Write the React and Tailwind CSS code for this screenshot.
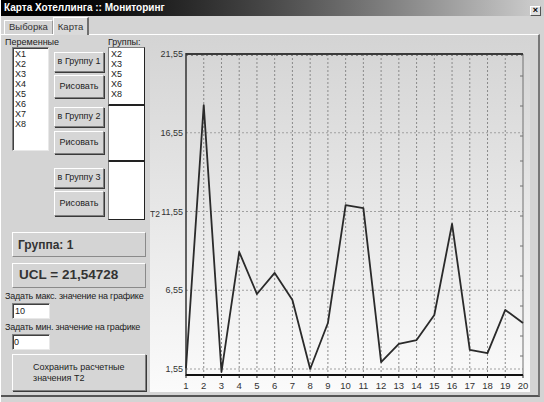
import React from "react";

const font = { fontFamily: '"Liberation Sans", Arial, sans-serif' };

const values = [
  1.6, 18.31, 1.36, 8.98, 6.31, 7.65, 5.93, 1.55, 4.47, 11.96, 11.77, 1.99,
  3.14, 3.39, 4.98, 10.76, 2.76, 2.56, 5.3, 4.47,
];

// chart svg is placed at page x=150, y=36
const X0 = 36;
const X1 = 373;
const xAt = (i) => X0 + (i * (X1 - X0)) / 19;
const yAt = (v) => 18 + (21.55 - v) * 15.75;
const BOTTOM = 339;

const Btn = ({ children, className = "" }) => (
  <div
    className={`flex items-center justify-center bg-[#d6d6d6] border border-t-white border-l-white border-r-[#808080] border-b-[#808080] shadow-[1px_1px_0_#3a3a3a] text-[9px] text-[#222] whitespace-nowrap ${className}`}
  >
    {children}
  </div>
);

const Sunken = ({ children, className = "" }) => (
  <div
    className={`bg-white border border-t-[#808080] border-l-[#808080] border-r-[#e8e8e8] border-b-[#e8e8e8] shadow-[inset_1px_1px_0_#404040] ${className}`}
  >
    {children}
  </div>
);

const Chart = () => {
  const ys = [21.55, 16.55, 11.55, 6.55, 1.55];
  const pts = values.map((v, i) => `${xAt(i)},${yAt(v)}`).join(" ");
  return (
    <svg width="380" height="356" className="block">
      <defs>
        <linearGradient id="bg" x1="0" y1="0" x2="0" y2="1">
          <stop offset="0" stopColor="#d4d4d4" />
          <stop offset="1" stopColor="#fbfbfb" />
        </linearGradient>
      </defs>
      <rect x="0" y="0" width="380" height="356" fill="url(#bg)" />
      {values.map((_, i) =>
        i > 0 && i < 19 ? (
          <line
            key={"v" + i}
            x1={xAt(i)}
            x2={xAt(i)}
            y1={18}
            y2={BOTTOM}
            stroke="#8a8a8a"
            strokeWidth="1"
            strokeDasharray="2 2"
          />
        ) : null
      )}
      {ys.slice(1).map((v) => (
        <line
          key={"h" + v}
          x1={X0}
          x2={X1}
          y1={yAt(v)}
          y2={yAt(v)}
          stroke="#a0a0a0"
          strokeWidth="1"
          strokeDasharray="2 2"
        />
      ))}
      {ys.map((v) => (
        <text
          key={"t" + v}
          x={33}
          y={yAt(v) + 3}
          textAnchor="end"
          fontSize="9"
          fill="#333"
          style={font}
        >
          {v.toFixed(2).replace(".", ",")}
        </text>
      ))}
      <text x="0" y="181" fontSize="8.5" fill="#333" style={font}>
        T2
      </text>
      {/* right axis */}
      <line x1={X1} x2={X1} y1={18} y2={BOTTOM} stroke="#707070" strokeWidth="1" />
      {[40, 70, 100, 125, 150, 180, 210, 240, 270, 300, 320].map((y) => (
        <line key={"r" + y} x1={X1 - 3} x2={X1} y1={y} y2={y} stroke="#707070" />
      ))}
      {/* UCL line */}
      <line x1={X0} x2={X1} y1={18} y2={18} stroke="#3a3a3a" strokeWidth="2" />
      <line
        x1={X0}
        x2={X1}
        y1={19.5}
        y2={19.5}
        stroke="#888"
        strokeWidth="1"
        strokeDasharray="2 3"
      />
      {/* left and bottom axis */}
      <line x1={X0} x2={X0} y1={17} y2={BOTTOM + 1} stroke="#333" strokeWidth="1.5" />
      <line x1={X0} x2={X1} y1={BOTTOM} y2={BOTTOM} stroke="#111" strokeWidth="2" />
      {values.map((_, i) => (
        <line
          key={"bt" + i}
          x1={xAt(i)}
          x2={xAt(i)}
          y1={BOTTOM}
          y2={BOTTOM + 3}
          stroke="#222"
        />
      ))}
      {values.map((_, i) => (
        <text
          key={"x" + i}
          x={xAt(i)}
          y={BOTTOM + 14}
          textAnchor="middle"
          fontSize="9.5"
          fill="#333"
          style={font}
        >
          {i + 1}
        </text>
      ))}
      <polyline
        points={pts}
        fill="none"
        stroke="#2a2a2a"
        strokeWidth="1.8"
        strokeLinejoin="round"
      />
    </svg>
  );
};

export default function App() {
  return (
    <div
      className="w-[544px] h-[402px] bg-[#d4d4d4] overflow-hidden flex flex-col border-l border-white"
      style={font}
    >
      <div className="h-[16px] flex items-center justify-between bg-gradient-to-r from-black via-[#4a4a4a] to-[#d0d0d0] pl-[3px] pr-[3px]">
        <span className="text-[10px] font-bold text-white leading-none">
          Карта Хотеллинга :: Мониторинг
        </span>
        <span className="w-[11px] h-[10px] mt-[5px] flex items-center justify-center bg-[#e0e0e0] border border-t-white border-l-white border-r-[#555] border-b-[#555] text-[9px] font-bold leading-none text-black">
          ×
        </span>
      </div>

      <div className="h-[18px] flex items-end pl-[3px]">
        <div className="h-[14px] px-[4px] flex items-center text-[9.5px] text-[#333] border-t border-l border-white border-r border-r-[#9a9a9a]">
          Выборка
        </div>
        <div className="h-[18px] px-[4px] flex items-start pt-[2px] text-[9.5px] text-[#333] bg-[#dadada] border-t border-l border-white border-r-2 border-r-[#707070] -mb-[1px] relative">
          Карта
        </div>
      </div>

      <div className="flex-1 flex border-t border-white border-b-2 border-b-[#555] border-r-2 border-r-[#777] mb-[5px] mr-[4px]">
        <div className="w-[148px] flex flex-col">
          <div className="flex mt-[2px] h-[10px] text-[9px] leading-[10px] text-[#222]">
            <span className="ml-[4px] w-[103px]">Переменные</span>
            <span>Группы:</span>
          </div>
          <div className="flex">
            <Sunken className="ml-[11px] w-[37px] h-[104px] pl-[2px] pt-[1px] text-[9px] leading-[10px] text-[#222]">
              {["X1", "X2", "X3", "X4", "X5", "X6", "X7", "X8"].map((x) => (
                <div key={x}>{x}</div>
              ))}
            </Sunken>
            <div className="ml-[5px] w-[50px] flex flex-col">
              <Btn className="mt-[5px] h-[20px]">в Группу 1</Btn>
              <Btn className="mt-[3px] h-[23px]">Рисовать</Btn>
              <Btn className="mt-[9px] h-[20px]">в Группу 2</Btn>
              <Btn className="mt-[4px] h-[23px]">Рисовать</Btn>
              <Btn className="mt-[14px] h-[20px]">в Группу 3</Btn>
              <Btn className="mt-[3px] h-[25px]">Рисовать</Btn>
            </div>
            <div className="ml-[4px] w-[37px] flex flex-col">
              <div className="h-[59px] bg-white border border-[#222] border-t-[#808080] border-l-[#808080] border-b-2 pl-[2px] pt-[1px] text-[9px] leading-[10px] text-[#222]">
                {["X2", "X3", "X5", "X6", "X8"].map((x) => (
                  <div key={x}>{x}</div>
                ))}
              </div>
              <div className="h-[55px] bg-white border border-[#222] border-t-0 border-l-[#808080]" />
              <div className="h-[59px] bg-white border border-[#222] border-l-[#808080]" />
            </div>
          </div>

          <div className="ml-[11px] mt-[12px] w-[134px] h-[25px] flex items-center pl-[5px] border border-t-white border-l-white border-r-[#8a8a8a] border-b-[#8a8a8a] text-[12px] font-bold text-[#333]">
            Группа: 1
          </div>
          <div className="ml-[11px] mt-[6px] w-[134px] h-[25px] flex items-center pl-[6px] border border-t-white border-l-white border-r-[#8a8a8a] border-b-[#8a8a8a] text-[13.5px] font-bold text-[#333]">
            UCL = 21,54728
          </div>
          <div className="ml-[4px] mt-[3px] text-[9px] tracking-[-0.2px] leading-[11px] text-[#222] whitespace-nowrap">
            Задать макс. значение на графике
          </div>
          <Sunken className="ml-[11px] mt-[1px] w-[38px] h-[16px] pl-[2px] text-[9px] leading-[14px] text-[#222]">
            10
          </Sunken>
          <div className="ml-[4px] mt-[3px] text-[9px] tracking-[-0.2px] leading-[11px] text-[#222] whitespace-nowrap">
            Задать мин. значение на графике
          </div>
          <Sunken className="ml-[11px] mt-[1px] w-[38px] h-[16px] pl-[1px] text-[9px] leading-[14px] text-[#222]">
            0
          </Sunken>
          <Btn className="ml-[11px] mt-[4px] w-[134px] h-[37px] !justify-start pl-[20px] text-left leading-[11px] text-[9.5px]">
            <span>
              Сохранить расчетные
              <br />
              значения Т2
            </span>
          </Btn>
        </div>
        <div className="mt-[1px] ml-[1px]">
          <Chart />
        </div>
      </div>
    </div>
  );
}
